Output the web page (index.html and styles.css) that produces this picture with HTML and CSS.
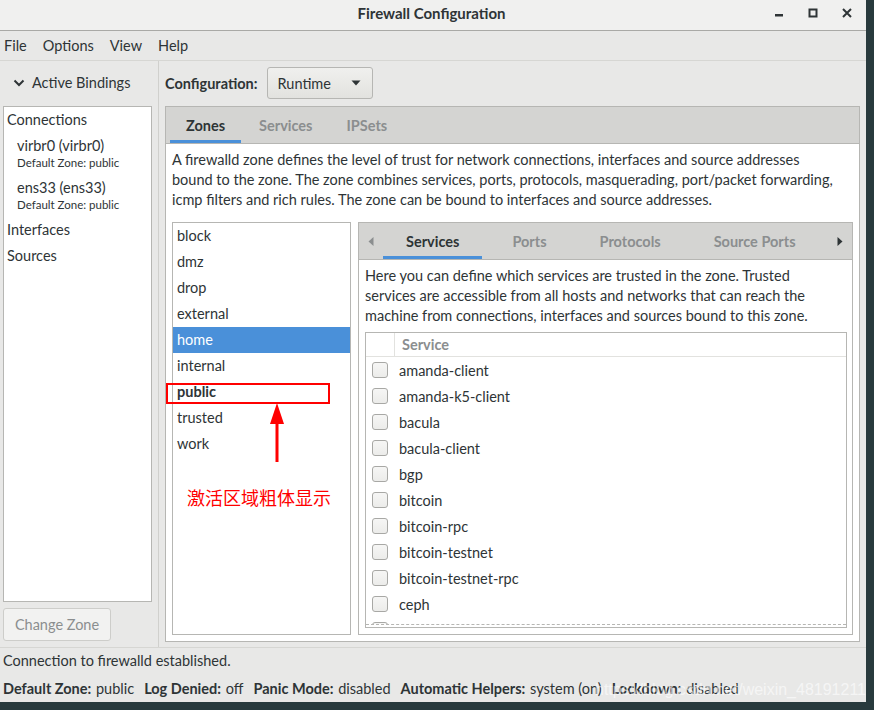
FILE: index.html
```html
<!DOCTYPE html>
<html lang="en">
<head>
<meta charset="utf-8">
<title>Firewall Configuration</title>
<link rel="stylesheet" href="styles.css">
</head>
<body>
<div class="window">
  <header class="titlebar">
    <div class="tb-side"></div>
    <div class="title">Firewall Configuration</div>
    <div class="tb-side wm-buttons">
      <span class="wm-btn"><svg width="10" height="10" viewBox="0 0 10 10"><rect x="1" y="6" width="8" height="2.5" fill="#2e3436"/></svg></span>
      <span class="wm-btn"><svg width="10" height="10" viewBox="0 0 10 10"><rect x="1.5" y="1.5" width="7" height="7" fill="none" stroke="#2e3436" stroke-width="2"/></svg></span>
      <span class="wm-btn"><svg width="10" height="10" viewBox="0 0 10 10"><path d="M1 1 L9 9 M9 1 L1 9" stroke="#2e3436" stroke-width="2"/></svg></span>
    </div>
  </header>

  <nav class="menubar">
    <span class="menu-item">File</span>
    <span class="menu-item">Options</span>
    <span class="menu-item">View</span>
    <span class="menu-item">Help</span>
  </nav>

  <div class="main">
    <aside class="sidebar">
      <div class="bindings-head">
        <svg class="chevron" width="12" height="8" viewBox="0 0 12 8"><path d="M1.5 1.5 L6 6 L10.5 1.5" fill="none" stroke="#2e3436" stroke-width="2"/></svg>
        <span>Active Bindings</span>
      </div>
      <div class="bindings-box">
        <div class="bind-item">Connections</div>
        <div class="conn">
          <div class="conn-name">virbr0 (virbr0)</div>
          <div class="conn-sub">Default Zone: public</div>
        </div>
        <div class="conn">
          <div class="conn-name">ens33 (ens33)</div>
          <div class="conn-sub">Default Zone: public</div>
        </div>
        <div class="bind-item">Interfaces</div>
        <div class="bind-item">Sources</div>
      </div>
      <div class="sidebar-actions">
        <span class="btn btn-disabled">Change Zone</span>
      </div>
    </aside>

    <section class="content">
      <div class="config-row">
        <span class="config-label">Configuration:</span>
        <span class="btn combo">Runtime
          <svg class="combo-arrow" width="10" height="6" viewBox="0 0 10 6"><path d="M0.5 0.5 H9.5 L5 5.5 Z" fill="#2e3436"/></svg>
        </span>
      </div>

      <div class="notebook outer">
        <div class="tabs">
          <span class="tab active">Zones</span>
          <span class="tab">Services</span>
          <span class="tab">IPSets</span>
        </div>
        <div class="nb-body outer-body">
          <p class="desc">A firewalld zone defines the level of trust for network connections, interfaces and source addresses<br>bound to the zone. The zone combines services, ports, protocols, masquerading, port/packet forwarding,<br>icmp filters and rich rules. The zone can be bound to interfaces and source addresses.</p>
          <div class="zone-area">
            <ul class="zone-list">
              <li>block</li>
              <li>dmz</li>
              <li>drop</li>
              <li>external</li>
              <li class="selected">home</li>
              <li>internal</li>
              <li class="active-zone">public</li>
              <li>trusted</li>
              <li>work</li>
            </ul>

            <div class="notebook inner">
              <div class="tabs inner-tabs">
                <span class="scroll-arrow"><svg width="6" height="9" viewBox="0 0 6 9"><path d="M5.5 0 V9 L0.5 4.5 Z" fill="#8b8e8f"/></svg></span>
                <span class="tab active">Services</span>
                <span class="tab">Ports</span>
                <span class="tab">Protocols</span>
                <span class="tab">Source Ports</span>
                <span class="tabs-fill"></span>
                <span class="scroll-arrow"><svg width="6" height="9" viewBox="0 0 6 9"><path d="M0.5 0 V9 L5.5 4.5 Z" fill="#2e3436"/></svg></span>
              </div>
              <div class="nb-body inner-body">
                <p class="desc">Here you can define which services are trusted in the zone. Trusted<br>services are accessible from all hosts and networks that can reach the<br>machine from connections, interfaces and sources bound to this zone.</p>
                <div class="tree">
                  <div class="tree-head">
                    <span class="col-check"></span>
                    <span class="col-name">Service</span>
                  </div>
                  <div class="tree-rows">
                    <div class="row"><span class="check"></span><span>amanda-client</span></div>
                    <div class="row"><span class="check"></span><span>amanda-k5-client</span></div>
                    <div class="row"><span class="check"></span><span>bacula</span></div>
                    <div class="row"><span class="check"></span><span>bacula-client</span></div>
                    <div class="row"><span class="check"></span><span>bgp</span></div>
                    <div class="row"><span class="check"></span><span>bitcoin</span></div>
                    <div class="row"><span class="check"></span><span>bitcoin-rpc</span></div>
                    <div class="row"><span class="check"></span><span>bitcoin-testnet</span></div>
                    <div class="row"><span class="check"></span><span>bitcoin-testnet-rpc</span></div>
                    <div class="row"><span class="check"></span><span>ceph</span></div>
                    <div class="row"><span class="check"></span><span>ceph-mon</span></div>
                  </div>
                </div>
              </div>
            </div>
          </div>
        </div>
      </div>
    </section>
  </div>

  <div class="statusbar">Connection to firewalld established.</div>
  <div class="infobar">
    <span class="info"><b>Default Zone:</b> public</span>
    <span class="info"><b>Log Denied:</b> off</span>
    <span class="info"><b>Panic Mode:</b> disabled</span>
    <span class="info"><b>Automatic Helpers:</b> system (on)</span>
    <span class="info"><b>Lockdown:</b> disabled</span>
  </div>

  <div class="annot-box"></div>
  <svg class="annot-arrow" width="18" height="62" viewBox="0 0 18 62"><path d="M9 1 L2 22 L16 22 Z" fill="#ff0000"/><rect x="7.5" y="20" width="3" height="40" fill="#ff0000"/></svg>
  <div class="annot-text">激活区域粗体显示</div>
  <div class="watermark">https://blog.csdn.net/weixin_48191211</div>
</div>
</body>
</html>
```

FILE: styles.css
```css
html, body {
  margin: 0;
  padding: 0;
}
body {
  background: #283a3d;
  width: 874px;
  height: 710px;
  overflow: hidden;
  font-family: "Lato", "Noto Sans", sans-serif;
  font-size: 14px;
  color: #2e3436;
}
.window {
  position: relative;
  width: 866px;
  height: 702px;
  background: #e8e8e7;
  display: flex;
  flex-direction: column;
}

/* title bar */
.titlebar {
  box-sizing: border-box;
  height: 31px;
  padding-bottom: 4px;
  flex: none;
  background: #f0f0ef;
  border-bottom: 1px solid #a9a9a6;
  display: grid;
  grid-template-columns: 1fr auto 1fr;
  align-items: center;
}
.title {
  font-weight: bold;
  font-size: 15px;
  padding-right: 3px;
}
.wm-buttons {
  display: flex;
  justify-content: flex-end;
  padding-right: 2px;
}
.wm-btn {
  width: 34px;
  height: 26px;
  display: flex;
  align-items: center;
  justify-content: center;
}

/* menu */
.menubar {
  height: 29px;
  flex: none;
  border-bottom: 1px solid #d6d6d3;
  display: flex;
  align-items: center;
  padding-left: 4px;
  font-size: 14.5px;
}
.menu-item {
  margin-right: 16px;
}

/* main */
.main {
  flex: 1;
  display: flex;
  min-height: 0;
}
.sidebar {
  width: 158px;
  flex: none;
  border-right: 1px solid #d0d0cd;
  display: flex;
  flex-direction: column;
}
.bindings-head {
  height: 45px;
  box-sizing: border-box;
  padding-bottom: 2px;
  display: flex;
  align-items: center;
  padding-left: 13px;
  gap: 7px;
  font-size: 14.5px;
}
.chevron { display: block; }
.bindings-box {
  flex: 1;
  margin: 0 6px 0 3px;
  background: #fff;
  border: 1px solid #b6b6b3;
}
.bind-item {
  height: 26px;
  line-height: 26px;
  padding-left: 3px;
  font-size: 14.5px;
}
.conn {
  padding: 4px 0 4px 13px;
}
.conn-name {
  line-height: 18px;
  font-size: 14.5px;
}
.conn-sub {
  line-height: 16px;
  font-size: 11.5px;
}
.sidebar-actions {
  padding: 6px 0 6px 3px;
}
.btn {
  display: inline-flex;
  align-items: center;
  box-sizing: border-box;
  height: 33px;
  padding: 0 10px;
  border: 1px solid #b6b6b3;
  border-radius: 3px;
  background: linear-gradient(#f0f0ee, #e2e2df);
  font-size: 14.5px;
}
.btn-disabled {
  width: 108px;
  justify-content: center;
  color: #8b8e8f;
  border-color: #cdcdca;
  background: #f2f2f1;
}

/* content */
.content {
  flex: 1;
  min-width: 0;
  padding: 6px 6px 5px 6px;
  display: flex;
  flex-direction: column;
}
.config-row {
  display: flex;
  align-items: center;
  gap: 9px;
  margin-bottom: 7px;
}
.config-label {
  font-weight: bold;
  font-size: 14.5px;
}
.combo {
  width: 106px;
  height: 32px;
  padding: 0 11px 0 10px;
  justify-content: space-between;
}
.combo-arrow { display: block; }

.notebook {
  border: 1px solid #b6b6b3;
  background: #fff;
  display: flex;
  flex-direction: column;
}
.outer { flex: 1; min-height: 0; }
.tabs {
  height: 36px;
  flex: none;
  background: #d4d4d2;
  border-bottom: 1px solid #b6b6b3;
  display: flex;
  align-items: stretch;
  padding-left: 4px;
  gap: 2px;
}
.tab {
  flex: none;
  white-space: nowrap;
  display: flex;
  align-items: center;
  padding: 0 16px;
  font-weight: bold;
  font-size: 14.5px;
  color: #8b8e8f;
}
.tab.active {
  color: #2e3436;
  box-shadow: inset 0 -3px 0 #4a90d9;
}
.nb-body {
  flex: 1;
  min-height: 0;
  display: flex;
  flex-direction: column;
}
.outer-body {
  padding: 6px 6px 6px 6px;
}
.desc {
  margin: 0;
  line-height: 20px;
  white-space: nowrap;
  font-size: 14.5px;
}
.outer-body > .desc {
  margin-bottom: 12px;
}
.zone-area {
  flex: 1;
  min-height: 0;
  display: flex;
  gap: 7px;
}
.zone-list {
  list-style: none;
  margin: 0;
  padding: 0;
  width: 177px;
  flex: none;
  border: 1px solid #b6b6b3;
  background: #fff;
}
.zone-list li {
  height: 26px;
  line-height: 26px;
  padding-left: 4px;
  font-size: 14.5px;
}
.zone-list li.selected {
  background: #4a90d9;
  color: #fff;
}
.zone-list li.active-zone {
  font-weight: bold;
}

.inner { flex: 1; min-width: 0; }
.inner-tabs {
  padding-left: 0;
  gap: 0;
}
.inner-tabs .tab {
  padding: 0 23px;
}
.inner-tabs .tab + .tab {
  margin-left: 7px;
}
.scroll-arrow {
  flex: none;
  width: 24px;
  display: flex;
  align-items: center;
  justify-content: center;
}
.tabs-fill { flex: 1; }
.inner-body {
  padding: 6px 5px 6px 6px;
}
.inner-body > .desc {
  margin-bottom: 6px;
}
.tree {
  flex: 1;
  min-height: 0;
  border: 1px solid #b6b6b3;
  display: flex;
  flex-direction: column;
  padding-bottom: 2px;
}
.tree-head {
  height: 23px;
  flex: none;
  display: flex;
  border-bottom: 1px solid #e2e2df;
}
.col-check {
  width: 28px;
  border-right: 1px solid #e2e2df;
}
.col-name {
  padding-left: 7px;
  line-height: 23px;
  color: #8b8e8f;
  font-weight: bold;
  font-size: 14.5px;
}
.tree-rows {
  flex: 1;
  min-height: 0;
  overflow: hidden;
  border-bottom: 1px dashed #b6b6b3;
}
.row {
  height: 26px;
  display: flex;
  align-items: center;
  font-size: 14.5px;
}
.check {
  box-sizing: border-box;
  width: 16px;
  height: 16px;
  margin: 0 11px 0 6px;
  border: 1px solid #a8a8a5;
  border-radius: 3px;
  background: linear-gradient(#f6f6f5, #ececea);
}

/* status */
.statusbar {
  height: 26px;
  flex: none;
  border-top: 1px solid #d6d6d3;
  line-height: 26px;
  padding-left: 3px;
  font-size: 14.5px;
}
.infobar {
  height: 28px;
  flex: none;
  display: flex;
  align-items: center;
  padding-left: 3px;
  gap: 10px;
  font-size: 14.5px;
  white-space: nowrap;
}
.info b {
  margin-right: 1px;
}

/* annotations (overlays) */
.annot-box {
  position: absolute;
  left: 166px;
  top: 383px;
  width: 160px;
  height: 17px;
  border: 2px solid #ff0000;
}
.annot-arrow {
  position: absolute;
  left: 268px;
  top: 402px;
}
.annot-text {
  position: absolute;
  left: 187px;
  top: 485px;
  line-height: 24px;
  font-size: 18px;
  color: #ff0000;
  font-family: "Noto Sans CJK SC", sans-serif;
}
.watermark {
  position: absolute;
  left: 595px;
  top: 679px;
  font-family: "Liberation Sans", sans-serif;
  font-size: 16px;
  line-height: 22px;
  color: rgba(255, 255, 255, 0.6);
  white-space: nowrap;
}
```
